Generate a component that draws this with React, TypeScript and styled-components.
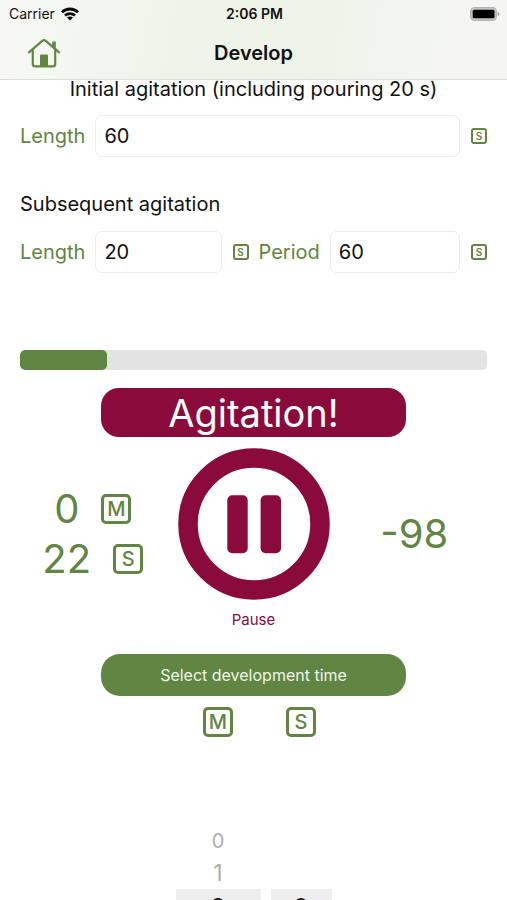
import React, { useState } from "react";
import styled, { createGlobalStyle } from "styled-components";

const green = "#618542";
const wine = "#8a0a3c";

const GlobalStyle = createGlobalStyle`
  * { box-sizing: border-box; }
  body {
    margin: 0;
    background: #fff;
    color: #111;
    font-family: Inter, "Liberation Sans", sans-serif;
    font-size: 20px;
    line-height: 24px;
  }
  button, input { font: inherit; color: inherit; }
`;

const Screen = styled.div`
  height: 100vh;
  overflow: hidden;
  display: flex;
  flex-direction: column;
`;

const Header = styled.header`
  flex: none;
  height: 80px;
  border-bottom: 1px solid #dcdedb;
  background: linear-gradient(100deg, #f7f8f6 0%, #eff4ea 34%, #eef3e8 62%, #f5f6f4 90%);
`;

const StatusBar = styled.div`
  height: 27px;
  padding: 0 7px 0 9px;
  display: grid;
  grid-template-columns: 1fr auto 1fr;
  align-items: center;
  font-size: 14px;
`;

const Carrier = styled.div`
  display: flex;
  align-items: center;
  gap: 6px;
`;

const Clock = styled.time`
  font-weight: 600;
`;

const Battery = styled.svg`
  justify-self: end;
`;

const NavBar = styled.nav`
  height: 52px;
  padding: 0 26px;
  display: grid;
  grid-template-columns: 36px 1fr 36px;
  align-items: center;
`;

const HomeButton = styled.button`
  height: 36px;
  padding: 0;
  border: 0;
  background: none;
  color: ${green};
  display: grid;
  place-items: center;
`;

const Title = styled.h1`
  margin: 0;
  font-size: 20px;
  font-weight: 600;
  text-align: center;
`;

const Main = styled.main`
  flex: 1;
  min-height: 0;
  display: flex;
  flex-direction: column;
`;

const Form = styled.form`
  flex: none;
  padding: 0 20px;
`;

const InitialHeading = styled.h2`
  margin: 0 0 17px;
  font-size: 20px;
  font-weight: 400;
  line-height: 18px;
  text-align: center;
`;

const SubsequentHeading = styled.h2`
  margin: 35px 0 15px;
  font-size: 20px;
  font-weight: 400;
`;

const Fields = styled.div`
  display: flex;
  gap: 10px;
`;

const Field = styled.label`
  flex: 1 1 0;
  min-width: 0;
  display: flex;
  align-items: center;
  gap: 10px;
  color: ${green};
`;

const NumberBox = styled.input`
  flex: 1;
  min-width: 0;
  height: 42px;
  padding: 0 8px;
  border: 1px solid #ececec;
  border-radius: 7px;
  background: #fff;
  color: #111;
  outline: none;
`;

const Badge = styled.span<{ $small?: boolean }>`
  flex: none;
  width: ${(p) => (p.$small ? 16 : 30)}px;
  height: ${(p) => (p.$small ? 16 : 30)}px;
  margin-left: ${(p) => (p.$small ? 1 : 0)}px;
  border: ${(p) => (p.$small ? 2 : 3)}px solid ${green};
  border-radius: ${(p) => (p.$small ? 3 : 5)}px;
  color: ${green};
  font-size: ${(p) => (p.$small ? 10 : 20)}px;
  font-weight: ${(p) => (p.$small ? 600 : 500)};
  line-height: 1;
  display: grid;
  place-items: center;
`;

const Track = styled.div`
  flex: none;
  height: 20px;
  margin: 77px 20px 0;
  border-radius: 5px;
  background: #e3e3e4;
  overflow: hidden;
`;

const Fill = styled.div`
  height: 100%;
  border-radius: 5px;
  background: ${green};
`;

const Banner = styled.div`
  flex: none;
  align-self: center;
  width: calc(100% - 202px);
  height: 49px;
  margin-top: 18px;
  border-radius: 18px;
  background: ${wine};
  color: #fff;
  font-size: 38px;
  line-height: 50px;
  text-align: center;
`;

const Timer = styled.section`
  flex: none;
  margin-top: 11px;
  padding: 0 8px;
  display: grid;
  grid-template-columns: 1fr 152px 1fr;
`;

const Side = styled.div`
  padding-bottom: 10px;
  display: flex;
  flex-direction: column;
  align-items: center;
  justify-content: center;
  color: ${green};
  font-size: 40px;
  line-height: 50px;
`;

const Elapsed = styled.div`
  display: flex;
  align-items: center;
  gap: 22px;
`;

const PauseButton = styled.button`
  padding: 0;
  border: 0;
  background: none;
  color: ${wine};
  font-size: 15px;
  line-height: 20px;
  display: flex;
  flex-direction: column;
  align-items: center;
  gap: 10px;
`;

const SelectButton = styled.button`
  flex: none;
  align-self: center;
  width: calc(100% - 202px);
  height: 42px;
  margin-top: 24px;
  border: 0;
  border-radius: 19px;
  background: ${green};
  color: #eef5e8;
  font-size: 16px;
`;

const Picker = styled.section`
  flex: none;
  align-self: center;
  margin-top: 11px;
  display: grid;
  grid-template-columns: 85px 61px;
  gap: 0 10px;
  justify-items: center;
`;

const Wheel = styled.ul`
  width: 100%;
  margin: 88px 0 0;
  padding: 0;
  list-style: none;
  text-align: center;
`;

const Option = styled.li<{ $far?: boolean }>`
  height: 32px;
  color: #aeaeae;
  font-size: ${(p) => (p.$far ? 20 : 23)}px;
  line-height: 32px;
`;

const Selected = styled.li`
  height: 44px;
  background: #eee;
  color: #222;
  font-size: 26px;
  line-height: 38px;
`;

const WifiIcon = () => (
  <svg width="18" height="14" viewBox="0 0 18 14" aria-hidden="true">
    <g fill="none" stroke="#0b0b0b" strokeWidth="2.8">
      <path d="M1 5.2 C5.4 .9 12.6 .9 17 5.2" />
      <path d="M4 8.6 C6.8 5.9 11.2 5.9 14 8.6" />
    </g>
    <path d="M9 13.6 L6 10.6 C7.6 9.1 10.4 9.1 12 10.6Z" fill="#0b0b0b" />
  </svg>
);

const BatteryIcon = () => (
  <Battery width="30" height="14" viewBox="0 0 30 14" aria-label="Battery full">
    <rect x=".7" y=".7" width="25.6" height="12.6" rx="3.8" fill="#c6c8c4" stroke="#b2b4b0" strokeWidth="1.3" />
    <rect x="2.7" y="2.7" width="21.8" height="8.6" rx="1.6" fill="#000" />
    <path d="M27.6 4.8 C30.2 5.6 30.2 8.4 27.6 9.2Z" fill="#a9aba7" />
  </Battery>
);

const HomeIcon = () => (
  <svg width="34" height="30" viewBox="0 0 34 30" aria-hidden="true">
    <g fill="none" stroke="currentColor" strokeWidth="2.2" strokeLinecap="round" strokeLinejoin="round">
      <path d="M2 14.4 L15.3 2.9 Q17 1.4 18.7 2.9 L32 14.4" />
      <path d="M5.8 12.5 V26 Q5.8 28.4 8.2 28.4 H25.8 Q28.2 28.4 28.2 26 V12.5" />
    </g>
    <path d="M25.2 3.6 H28.8 V11.3 L25.2 8.2Z" fill="currentColor" />
    <path d="M13 28 V17.6 Q13 16.6 14 16.6 H20 Q21 16.6 21 17.6 V28Z" fill="currentColor" />
  </svg>
);

const PauseIcon = () => (
  <svg width="152" height="152" viewBox="0 0 152 152" aria-hidden="true">
    <circle cx="76" cy="76" r="66" fill="none" stroke="currentColor" strokeWidth="19.5" />
    <rect x="49.3" y="47.3" width="20.4" height="58" rx="5" fill="currentColor" />
    <rect x="82.6" y="47.3" width="20.4" height="58" rx="5" fill="currentColor" />
  </svg>
);

interface TimeFieldProps {
  label: string;
  initial: string;
}

function TimeField({ label, initial }: TimeFieldProps) {
  const [value, setValue] = useState(initial);
  return (
    <Field>
      {label}
      <NumberBox inputMode="numeric" value={value} onChange={(e) => setValue(e.target.value)} />
      <Badge $small>S</Badge>
    </Field>
  );
}

export default function App() {
  const progress = 18.6;
  return (
    <Screen>
      <GlobalStyle />
      <Header>
        <StatusBar>
          <Carrier>
            Carrier
            <WifiIcon />
          </Carrier>
          <Clock>2:06 PM</Clock>
          <BatteryIcon />
        </StatusBar>
        <NavBar>
          <HomeButton aria-label="Home">
            <HomeIcon />
          </HomeButton>
          <Title>Develop</Title>
        </NavBar>
      </Header>
      <Main>
        <Form>
          <InitialHeading>Initial agitation (including pouring 20 s)</InitialHeading>
          <Fields>
            <TimeField label="Length" initial="60" />
          </Fields>
          <SubsequentHeading>Subsequent agitation</SubsequentHeading>
          <Fields>
            <TimeField label="Length" initial="20" />
            <TimeField label="Period" initial="60" />
          </Fields>
        </Form>
        <Track role="progressbar" aria-valuenow={progress} aria-label="Development progress">
          <Fill style={{ width: `${progress}%` }} />
        </Track>
        <Banner>Agitation!</Banner>
        <Timer>
          <Side>
            <Elapsed>
              0 <Badge>M</Badge>
            </Elapsed>
            <Elapsed>
              22 <Badge>S</Badge>
            </Elapsed>
          </Side>
          <PauseButton>
            <PauseIcon />
            Pause
          </PauseButton>
          <Side>-98</Side>
        </Timer>
        <SelectButton>Select development time</SelectButton>
        <Picker>
          <Badge>M</Badge>
          <Badge>S</Badge>
          <Wheel aria-label="Minutes">
            <Option $far>0</Option>
            <Option>1</Option>
            <Selected>2</Selected>
          </Wheel>
          <Wheel aria-label="Seconds">
            <Option />
            <Option />
            <Selected>0</Selected>
          </Wheel>
        </Picker>
      </Main>
    </Screen>
  );
}
